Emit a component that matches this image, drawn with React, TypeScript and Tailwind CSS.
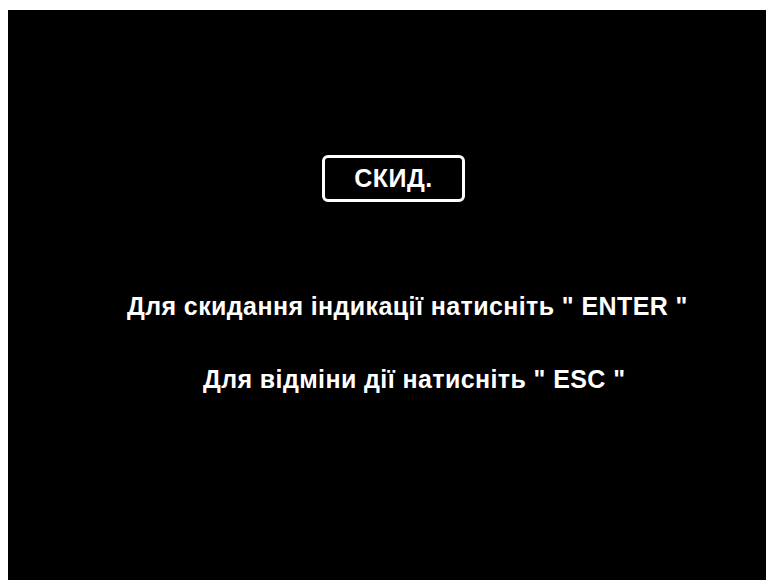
export default function App() {
    return (
        <div className="w-[766px] h-[580px] bg-white pt-[10px] pl-[8px] overflow-hidden">
            <div className="h-full bg-black text-white font-bold font-['Liberation_Sans',Arial,sans-serif] flex flex-col items-start">
                {/* reset caption box */}
                <div className="mt-[145px] ml-[314px] w-[143px] h-[47px] border-[3px] border-white rounded-[6px] flex items-center justify-center text-[25px] leading-none tracking-[0.5px]">
                    СКИД.
                </div>
                <p className="mt-[92px] ml-[119px] text-[25px] leading-none tracking-[0.4px] whitespace-pre">
                    Для скидання індикації натисніть " ENTER "
                </p>
                <p className="mt-[48px] ml-[195px] text-[25px] leading-none tracking-[0.4px] whitespace-pre">
                    Для відміни дії натисніть " ESC "
                </p>
            </div>
        </div>
    );
}
